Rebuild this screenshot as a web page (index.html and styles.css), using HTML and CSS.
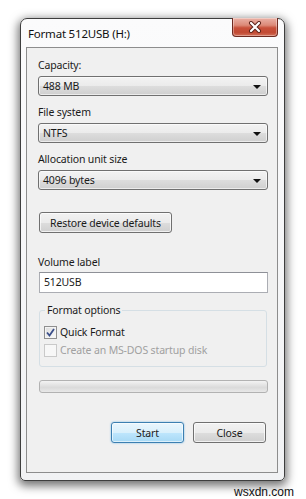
FILE: index.html
```html
<!DOCTYPE html>
<html lang="en">
<head>
    <meta charset="UTF-8">
    <title>Format 512USB (H:)</title>
    <link rel="stylesheet" href="styles.css">
</head>
<body>
    <div class="window">
        <div class="titlebar">
            <span class="title">Format 512USB (H:)</span>
            <button class="close-btn" aria-label="Close">
                <svg width="14" height="12" viewBox="0 0 14 12">
                    <path d="M3 2 L11 10 M11 2 L3 10" stroke="#5a2018" stroke-width="4" stroke-linecap="round"/>
                    <path d="M3 2 L11 10 M11 2 L3 10" stroke="#ffffff" stroke-width="2.2" stroke-linecap="round"/>
                </svg>
            </button>
        </div>

        <div class="panel">
            <div class="field">
                <div class="field-label">Capacity:</div>
                <div class="combo"><span>488 MB</span><span class="arrow"></span></div>
            </div>
            <div class="field">
                <div class="field-label">File system</div>
                <div class="combo"><span>NTFS</span><span class="arrow"></span></div>
            </div>
            <div class="field">
                <div class="field-label">Allocation unit size</div>
                <div class="combo"><span>4096 bytes</span><span class="arrow"></span></div>
            </div>

            <button class="btn restore-btn">Restore device defaults</button>

            <div class="field volume">
                <div class="field-label">Volume label</div>
                <div class="textbox">512USB</div>
            </div>

            <fieldset class="options">
                <legend>Format options</legend>
                <div class="check-row">
                    <span class="checkbox">
                        <svg width="9" height="9" viewBox="0 0 9 9">
                            <path d="M1 4.5 L3.5 7.5 L8 1" fill="none" stroke="#3b4f8a" stroke-width="1.8"/>
                        </svg>
                    </span>
                    Quick Format
                </div>
                <div class="check-row disabled">
                    <span class="checkbox"></span>
                    Create an MS-DOS startup disk
                </div>
            </fieldset>

            <div class="progress"></div>

            <div class="actions">
                <button class="btn default-btn">Start</button>
                <button class="btn">Close</button>
            </div>
        </div>
    </div>
    <div class="watermark">wsxdn.com</div>
</body>
</html>
```

FILE: styles.css
```css
* {
    margin: 0;
    padding: 0;
    box-sizing: border-box;
}

body {
    background: #ffffff;
    font-family: 'Noto Sans', 'Open Sans', sans-serif;
    font-size: 10.5px;
    letter-spacing: -0.15px;
    color: #1a1a1a;
}

.window {
    position: relative;
    margin: 18px 0 0 20px;
    width: 265px;
    height: 463px;
    border: 1px solid #3e3e3e;
    border-radius: 7px 7px 5px 5px;
    background: linear-gradient(#fbfbfc, #f1f2f4);
    box-shadow: 0 3px 10px 2px rgba(0, 0, 0, 0.55);
    padding: 0 6px 7px 5px;
}

.titlebar {
    height: 28px;
    display: flex;
    align-items: center;
    padding-left: 2px;
    padding-top: 1px;
}

.title {
    font-size: 11.5px;
    letter-spacing: -0.2px;
    color: #111;
}

.close-btn {
    position: absolute;
    top: -1px;
    right: 6px;
    width: 46px;
    height: 19px;
    border: 1px solid #6e2a20;
    border-top: none;
    border-radius: 0 0 4px 4px;
    background: linear-gradient(#eab1a6 0%, #dc8a78 40%, #c8503a 55%, #c24a33 80%, #d2705a 100%);
    box-shadow: inset 0 0 0 1px rgba(255, 255, 255, 0.35);
    display: flex;
    align-items: center;
    justify-content: center;
}

.panel {
    height: 426px;
    border: 1px solid #8d8d8d;
    background: #f0f0f0;
    padding: 10px 9px 0 11px;
}

.field {
    margin-bottom: 9px;
}

.field-label {
    height: 15px;
    line-height: 15px;
    margin-bottom: 3px;
}

.combo {
    height: 20px;
    border: 1px solid #707070;
    border-radius: 3px;
    background: linear-gradient(#f3f3f3 0%, #ebebeb 50%, #dddddd 51%, #cfcfcf 100%);
    box-shadow: inset 0 0 0 1px rgba(255, 255, 255, 0.6);
    display: flex;
    align-items: center;
    justify-content: space-between;
    padding: 0 6px 0 4px;
}

.arrow {
    width: 0;
    height: 0;
    border-left: 4px solid transparent;
    border-right: 4px solid transparent;
    border-top: 4px solid #111;
    margin-top: 1px;
}

.btn {
    height: 21px;
    border: 1px solid #707070;
    border-radius: 3px;
    background: linear-gradient(#f2f2f2 0%, #ebebeb 50%, #dddddd 51%, #cfcfcf 100%);
    box-shadow: inset 0 0 0 1px rgba(255, 255, 255, 0.7);
    font-family: inherit;
    font-size: 10.5px;
    letter-spacing: -0.15px;
    color: #1a1a1a;
}

.restore-btn {
    display: block;
    margin: 22px 0 0 1px;
    width: 133px;
}

.volume {
    margin-top: 22px;
    margin-bottom: 0;
}

.volume .field-label {
    margin-bottom: 2px;
}

.textbox {
    height: 21px;
    border: 1px solid #abadb3;
    border-top-color: #8e9097;
    background: #ffffff;
    line-height: 19px;
    padding-left: 4px;
    margin-left: 1px;
}

.options {
    margin: 10px 1px 0 1px;
    border: 1px solid #d5dfe5;
    border-radius: 3px;
    padding: 0 0 7px 4px;
}

.options legend {
    padding: 0 2px;
    margin-left: 1px;
    line-height: 15px;
}

.check-row {
    height: 18px;
    display: flex;
    align-items: center;
}

.check-row:first-of-type {
    margin-top: 5px;
}

.checkbox {
    width: 13px;
    height: 13px;
    border: 1px solid #8f8f8f;
    background: linear-gradient(135deg, #dcdcdc, #fbfbfb);
    box-shadow: inset 0 0 0 1px #f4f4f4;
    margin-right: 3px;
    display: flex;
    align-items: center;
    justify-content: center;
}

.check-row.disabled {
    color: #a0a0a0;
}

.check-row.disabled .checkbox {
    border-color: #c9c9c9;
    background: #f7f7f7;
    box-shadow: none;
}

.progress {
    margin: 13px 0 0 1px;
    height: 13px;
    border: 1px solid #b2b2b2;
    border-radius: 3px;
    background: linear-gradient(#f3f3f3, #dedede 50%, #d8d8d8 51%, #e8e8e8);
}

.actions {
    margin-top: 29px;
    display: flex;
    justify-content: flex-end;
    gap: 9px;
    padding-right: 2px;
}

.actions .btn {
    width: 73px;
}

.default-btn {
    border-color: #3c7fb1;
    background: linear-gradient(#eaf6fd 0%, #d9f0fc 50%, #bee6fd 51%, #a7d9f5 100%);
    box-shadow: inset 0 0 0 1px rgba(255, 255, 255, 0.6), 0 0 2px #6fb6e5;
}

.watermark {
    text-align: right;
    padding-right: 12px;
    margin-top: 4px;
    font-family: 'Liberation Sans', Arial, sans-serif;
    font-size: 12px;
    letter-spacing: 0;
    color: #111;
}
```
